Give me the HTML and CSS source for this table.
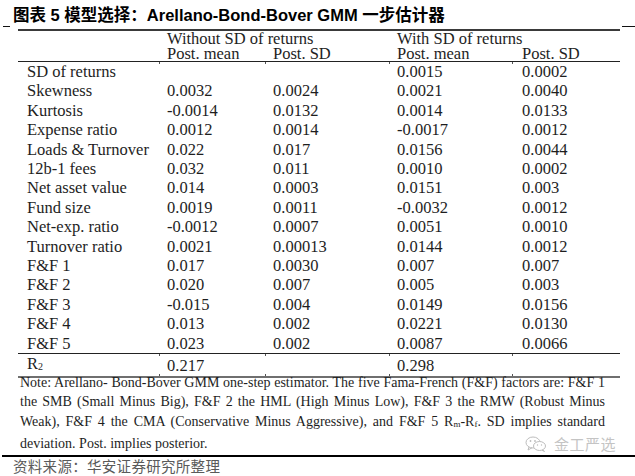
FILE: index.html
```html
<!DOCTYPE html>
<html lang="zh-CN">
<head>
<meta charset="utf-8">
<title>图表 5 模型选择</title>
<link rel="stylesheet" href="styles.css">
</head>
<body>
<div class="page">
  <div class="title-row">
    <span class="rule rule-l"></span>
    <h1 class="title">图表 5 模型选择：Arellano-Bond-Bover GMM 一步估计器</h1>
    <span class="rule rule-r"></span>
  </div>

  <table class="data">
    <colgroup>
      <col class="c-label"><col class="c-a"><col class="c-b"><col class="c-c"><col class="c-d">
    </colgroup>
    <thead>
      <tr class="h1">
        <th></th>
        <th colspan="2">Without SD of returns</th>
        <th colspan="2">With SD of returns</th>
      </tr>
      <tr class="h2">
        <th></th>
        <th>Post. mean</th>
        <th>Post. SD</th>
        <th>Post. mean</th>
        <th class="last">Post. SD</th>
      </tr>
    </thead>
    <tbody>
      <tr><td>SD of returns</td><td></td><td></td><td>0.0015</td><td class="last">0.0002</td></tr>
      <tr><td>Skewness</td><td>0.0032</td><td>0.0024</td><td>0.0021</td><td class="last">0.0040</td></tr>
      <tr><td>Kurtosis</td><td>-0.0014</td><td>0.0132</td><td>0.0014</td><td class="last">0.0133</td></tr>
      <tr><td>Expense ratio</td><td>0.0012</td><td>0.0014</td><td>-0.0017</td><td class="last">0.0012</td></tr>
      <tr><td>Loads &amp; Turnover</td><td>0.022</td><td>0.017</td><td>0.0156</td><td class="last">0.0044</td></tr>
      <tr><td>12b-1 fees</td><td>0.032</td><td>0.011</td><td>0.0010</td><td class="last">0.0002</td></tr>
      <tr><td>Net asset value</td><td>0.014</td><td>0.0003</td><td>0.0151</td><td class="last">0.003</td></tr>
      <tr><td>Fund size</td><td>0.0019</td><td>0.0011</td><td>-0.0032</td><td class="last">0.0012</td></tr>
      <tr><td>Net-exp. ratio</td><td>-0.0012</td><td>0.0007</td><td>0.0051</td><td class="last">0.0010</td></tr>
      <tr><td>Turnover ratio</td><td>0.0021</td><td>0.00013</td><td>0.0144</td><td class="last">0.0012</td></tr>
      <tr><td>F&amp;F 1</td><td>0.017</td><td>0.0030</td><td>0.007</td><td class="last">0.007</td></tr>
      <tr><td>F&amp;F 2</td><td>0.020</td><td>0.007</td><td>0.005</td><td class="last">0.003</td></tr>
      <tr><td>F&amp;F 3</td><td>-0.015</td><td>0.004</td><td>0.0149</td><td class="last">0.0156</td></tr>
      <tr><td>F&amp;F 4</td><td>0.013</td><td>0.002</td><td>0.0221</td><td class="last">0.0130</td></tr>
      <tr><td>F&amp;F 5</td><td>0.023</td><td>0.002</td><td>0.0087</td><td class="last">0.0066</td></tr>
      <tr class="r2"><td>R<span class="sub">2</span></td><td>0.217</td><td></td><td>0.298</td><td class="last"></td></tr>
    </tbody>
  </table>

  <div class="note">
    <div class="jl">Note: Arellano- Bond-Bover GMM one-step estimator. The five Fama-French (F&amp;F) factors are: F&amp;F 1</div>
    <div class="jl">the SMB (Small Minus Big), F&amp;F 2 the HML (High Minus Low), F&amp;F 3 the RMW (Robust Minus</div>
    <div class="jl">Weak), F&amp;F 4 the CMA (Conservative Minus Aggressive), and F&amp;F 5 R<span class="sub">m</span>-R<span class="sub">f</span>. SD implies standard</div>
    <div>deviation. Post. implies posterior.</div>
  </div>

  <div class="bottom-rule"></div>
  <div class="source">资料来源：华安证券研究所整理</div>

  <div class="wm">
    <svg class="wm-icon" width="22" height="16" viewBox="0 0 22 16" aria-hidden="true">
      <ellipse cx="8" cy="6.5" rx="7" ry="5.5" fill="none" stroke="#bdbdbd" stroke-width="1"/>
      <path d="M4 11 L3 14 L7 11.8" fill="none" stroke="#bdbdbd" stroke-width="1"/>
      <ellipse cx="14.5" cy="10" rx="6" ry="4.5" fill="#fff" stroke="#bdbdbd" stroke-width="1"/>
      <path d="M18 13.8 L19.5 15.5 L17 14.3" fill="none" stroke="#bdbdbd" stroke-width="1"/>
      <circle cx="5.5" cy="5" r="0.9" fill="#bdbdbd"/>
      <circle cx="10" cy="5" r="0.9" fill="#bdbdbd"/>
      <circle cx="12.5" cy="9" r="0.7" fill="#bdbdbd"/>
      <circle cx="16.5" cy="9" r="0.7" fill="#bdbdbd"/>
    </svg>
    <span class="wm-text">金工严选</span>
  </div>
</div>
</body>
</html>
```

FILE: styles.css
```css
html, body {
  margin: 0;
  padding: 0;
  background: #ffffff;
}

.page {
  position: relative;
  width: 635px;
  height: 476px;
  overflow: hidden;
  font-family: "Liberation Serif", "Times New Roman", serif;
  color: #1e1e1e;
}

/* ---------- title ---------- */
.title-row {
  display: flex;
  align-items: flex-start;
  height: 29px;
}

.rule {
  display: block;
  height: 1px;
  background: #111;
  margin-top: 26px;
}

.rule-l {
  width: 7px;
  margin-left: 3px;
}

.rule-r {
  width: 13px;
  margin-left: auto;
}

.title {
  margin: 0 0 0 3px;
  padding-top: 7px;
  font-family: "Liberation Sans", "Noto Sans CJK SC", sans-serif;
  font-weight: 700;
  font-size: 16.5px;
  line-height: 16px;
  color: #000;
  white-space: nowrap;
}

/* ---------- table ---------- */
.data {
  margin-left: 18px;
  width: 602px;
  border-collapse: collapse;
  table-layout: fixed;
  font-family: "Liberation Serif", "Times New Roman", serif;
  font-size: 16.5px;
  color: #1e1e1e;
}

.c-label { width: 142px; }
.c-a { width: 106px; }
.c-b { width: 124px; }
.c-c { width: 123px; }
.c-d { width: 107px; }

.data th,
.data td {
  position: relative;
  padding: 0 0 0 7px;
  text-align: left;
  font-weight: 400;
  white-space: nowrap;
  vertical-align: middle;
}

.data th:first-child,
.data td:first-child {
  padding-left: 9px;
}

.data .last {
  padding-left: 9px;
}

.data .h1 th {
  border-top: 2px solid #3a3a3a;
  height: 15px;
  line-height: 14px;
}

.data .h2 th {
  height: 15px;
  line-height: 15px;
  border-bottom: 1px solid #222;
}

.data tbody td {
  height: 19.4px;
  line-height: 19.4px;
}

.data .r2 td {
  border-top: 1px solid #222;
  border-bottom: 2px solid #6f6f6f;
  height: 19px;
  line-height: 19px;
}

/* small ticks at the column boundaries */
.data .h2 th:not(:first-child)::after,
.data .r2 td:not(:first-child)::before,
.data .r2 td:not(:first-child)::after {
  content: "";
  position: absolute;
  left: -1px;
  width: 1px;
  height: 2px;
  background: #555;
}

.data .h2 th:not(:first-child)::after {
  bottom: -3px;
}

.data .r2 td:not(:first-child)::before {
  top: 0;
}

.data .r2 td:not(:first-child)::after {
  bottom: 0;
}

.sub {
  font-size: 10px;
  vertical-align: -1px;
}

/* ---------- note ---------- */
.note {
  margin-top: -5px;
  padding: 0 30px 0 20px;
  font-size: 14px;
  line-height: 19.3px;
  color: #1e1e1e;
}

.note .jl {
  text-align: justify;
  text-align-last: justify;
}

.note .sub {
  font-size: 9px;
  vertical-align: -1px;
}

/* ---------- footer ---------- */
.bottom-rule {
  height: 2px;
  background: #000;
  margin: 2px 0 0 2px;
}

.source {
  padding-left: 13px;
  font-family: "Noto Sans CJK SC", sans-serif;
  font-size: 14.5px;
  letter-spacing: 0.3px;
  line-height: 17px;
  color: #5a5a5a;
}

/* ---------- watermark ---------- */
.wm {
  position: absolute;
  left: 525px;
  top: 436px;
  display: flex;
  align-items: center;
  gap: 7px;
}

.wm-icon {
  display: block;
}

.wm-text {
  font-family: "Noto Sans CJK SC", sans-serif;
  font-size: 15px;
  line-height: 16px;
  color: #c4c4c4;
  letter-spacing: 0.5px;
}
```
